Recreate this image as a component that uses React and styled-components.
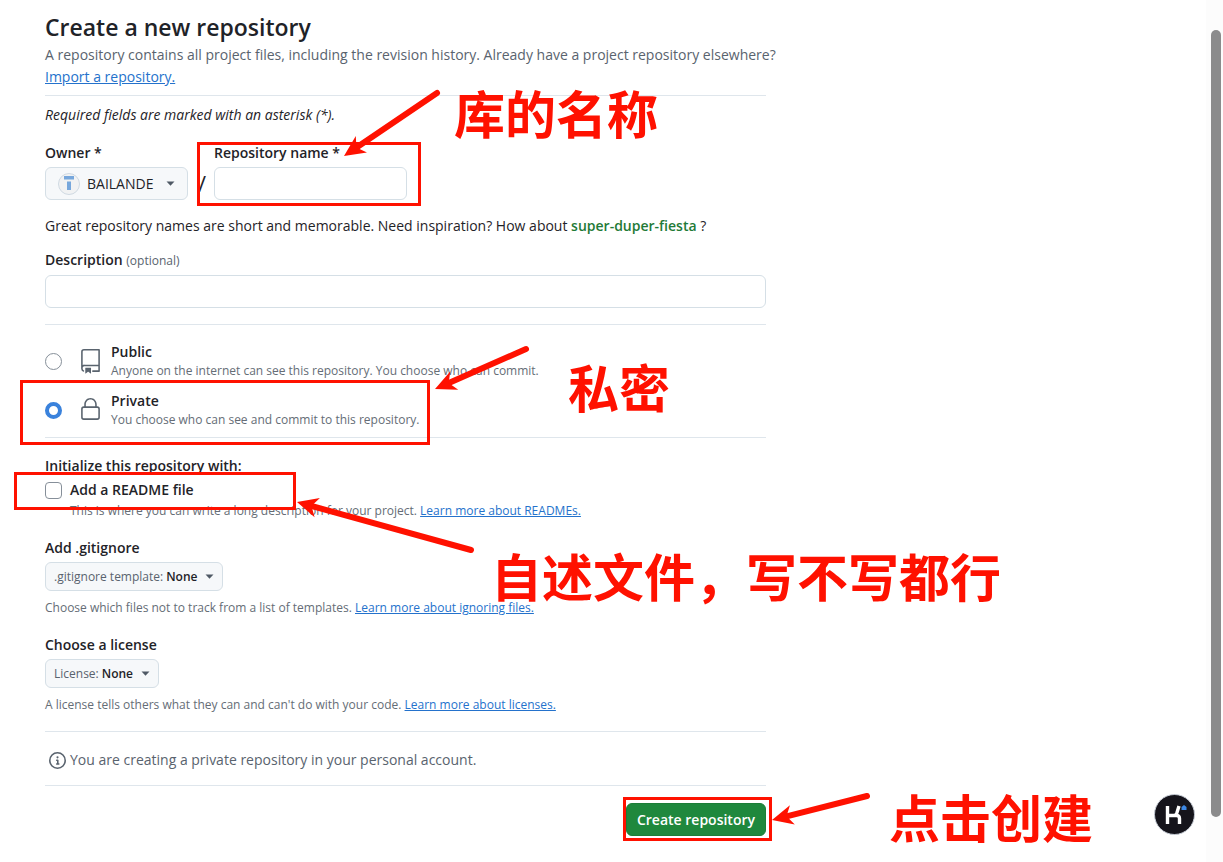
import React from "react";
import styled, { createGlobalStyle } from "styled-components";

const GlobalStyle = createGlobalStyle`
  *, *::before, *::after { box-sizing: border-box; }
  body {
    margin: 0;
    background: #fff;
    color: #1f2328;
    font-family: "Open Sans", "Noto Sans CJK SC", sans-serif;
    font-size: 14px;
    line-height: 22px;
  }
  button, input, select { font: inherit; color: inherit; }
`;

const Page = styled.div`
  position: relative;
  display: flex;
  min-height: 100vh;
`;

const Main = styled.main`
  flex: 1;
  min-width: 0;
  padding: 11px 45px 27px;
`;

const Form = styled.form`
  display: flex;
  flex-direction: column;
  max-width: 721px;
`;

const Title = styled.h1`
  margin: 0;
  font-size: 23px;
  line-height: 32px;
  font-weight: 600;
`;

const Lead = styled.p`
  margin: 1px 0 0;
  color: #59636e;
  white-space: nowrap;
`;

const Link = styled.a`
  color: #2472cc;
  text-decoration: underline;
`;

const Rule = styled.hr`
  width: 100%;
  height: 1px;
  margin: ${({ $top }) => $top}px 0 ${({ $bottom }) => $bottom}px;
  border: 0;
  background: #dfe6ec;
`;

const Required = styled.p`
  margin: 0;
  font-style: italic;
`;

const NameRow = styled.div`
  display: flex;
  align-items: flex-end;
  margin-top: 16px;
`;

const Field = styled.div`
  display: flex;
  flex-direction: column;
  align-items: ${({ $stretch }) => ($stretch ? "stretch" : "flex-start")};
  gap: 3px;
`;

const Label = styled.label`
  font-weight: 600;
`;

const Optional = styled.span`
  font-size: 12px;
  font-weight: 400;
  color: #59636e;
`;

const TextInput = styled.input`
  width: ${({ $width }) => $width || "100%"};
  height: 33px;
  padding: 0 12px;
  border: 1px solid #d5dfe6;
  border-radius: 6px;
  background: #fff;
`;

const Slash = styled.span`
  width: 26px;
  padding-left: 10px;
  font-size: 22px;
  line-height: 33px;
`;

const Picker = styled.label`
  display: inline-flex;
  align-items: center;
  height: ${({ $large }) => ($large ? 33 : 29)}px;
  padding: 0 ${({ $large }) => ($large ? 12 : 8)}px;
  border: 1px solid #d5dfe6;
  border-radius: 6px;
  background: #f6f8fa;
  color: #59636e;
  font-size: ${({ $large }) => ($large ? 14 : 12)}px;
  font-weight: 500;
`;

const Select = styled.select`
  appearance: none;
  margin: 0 ${({ $after }) => $after}px 0 ${({ $before }) => $before}px;
  padding: 0;
  border: 0;
  background: transparent;
  color: #1f2328;
  font-weight: ${({ $weight }) => $weight};
`;

const Suggestion = styled.p`
  margin: 15px 0 12px;
  strong { color: #1f7a37; font-weight: 600; }
`;

const Choice = styled.div`
  display: flex;
  align-items: center;
  gap: 16px;
  height: ${({ $height }) => $height}px;
`;

const Radio = styled.input`
  appearance: none;
  width: 17px;
  height: 17px;
  margin: 0;
  border: 1px solid #868f99;
  border-radius: 50%;
  background: #fff;
  &:checked { border: 4px solid #3a82dc; }
`;

const ChoiceText = styled.label`
  display: flex;
  flex-direction: column;
  margin-left: -8px;
  line-height: 19px;
`;

const Strong = styled.span`
  font-weight: 600;
`;

const Small = styled.span`
  font-size: 12px;
  line-height: 20px;
  color: #656d76;
`;

const GroupTitle = styled.h2`
  margin: 0;
  font-size: 14px;
  line-height: 22px;
  font-weight: 600;
`;

const CheckRow = styled.div`
  display: flex;
  align-items: center;
  gap: 8px;
  margin-top: 3px;
  line-height: 20px;
`;

const CheckBox = styled.input`
  appearance: none;
  width: 17px;
  height: 17px;
  margin: 0;
  border: 1px solid #868f99;
  border-radius: 4px;
  background: #fff;
`;

const Indented = styled.div`
  padding-left: 25px;
  line-height: 20px;
`;

const Section = styled.section`
  display: flex;
  flex-direction: column;
  align-items: flex-start;
  gap: 3px;
  margin-top: 16px;
`;

const Help = styled.p`
  margin: 4px 0 0;
  font-size: 12px;
  line-height: 20px;
  color: #656d76;
`;

const Info = styled.p`
  display: flex;
  align-items: center;
  gap: 4px;
  margin: 0;
  padding-left: 4px;
  color: #59636e;
`;

const Submit = styled.button`
  align-self: flex-end;
  height: 33px;
  padding: 0 10px;
  border: 1px solid #1c7d37;
  border-radius: 6px;
  background: #1f883d;
  color: #fff;
  font-weight: 600;
`;

const Rail = styled.div`
  display: flex;
  width: 17px;
  padding: 30px 2px 46px 5px;
  background: #fcfcfc;
`;

const Thumb = styled.div`
  flex: 1;
  border-radius: 5px;
  background: #8b8b8c;
`;

const Helper = styled.button`
  position: fixed;
  right: 28px;
  bottom: 27px;
  width: 41px;
  height: 41px;
  padding: 0;
  border: 1px solid #c7cdd6;
  border-radius: 50%;
  background: #15141b;
  svg { display: block; }
`;

const Marks = styled.div`
  position: absolute;
  inset: 0;
  pointer-events: none;
`;

const Frame = styled.div`
  position: absolute;
  left: ${({ $x }) => $x}px;
  top: ${({ $y }) => $y}px;
  width: ${({ $w }) => $w}px;
  height: ${({ $h }) => $h}px;
  border: 3px solid #ff1100;
`;

const Note = styled.span`
  position: absolute;
  left: ${({ $x }) => $x}px;
  top: ${({ $y }) => $y}px;
  color: #ff1100;
  font-family: "Noto Sans CJK SC", sans-serif;
  font-size: 51px;
  line-height: 60px;
  font-weight: 700;
  white-space: nowrap;
`;

const Arrows = styled.svg`
  position: absolute;
  left: 0;
  top: 0;
`;

const Caret = () => (
  <svg width="9" height="5" viewBox="0 0 9 5" aria-hidden="true">
    <path d="M0.500 0.500h8L4.500 4.800z" fill="#4f5965" />
  </svg>
);

const Avatar = () => (
  <svg width="22" height="22" viewBox="0 0 22 22" aria-hidden="true">
    <circle cx="11" cy="11" r="10.5" fill="#f1f2f3" stroke="#cfd9e2" />
    <path d="M6 3h10v3.5H6zM9 8.5h4V17H9z" fill="#77a7dc" />
  </svg>
);

const RepoIcon = () => (
  <svg width="25" height="25" viewBox="0 0 24 24" fill="#59636e" aria-hidden="true">
    <path d="M3 2.75A2.75 2.75 0 0 1 5.75 0h14.5a.75.75 0 0 1 .75.75v20.5a.75.75 0 0 1-.75.75h-6a.75.75 0 0 1 0-1.5h5.25v-4H6A1.5 1.5 0 0 0 4.5 18v.75c0 .716.43 1.334 1.05 1.605a.75.75 0 0 1-.6 1.374A3.25 3.25 0 0 1 3 18.75ZM19.5 1.5H5.75c-.69 0-1.25.56-1.25 1.25v12.651A2.989 2.989 0 0 1 6 15h13.5Z" />
    <path d="M7 18.25a.25.25 0 0 1 .25-.25h5a.25.25 0 0 1 .25.25v5.01a.25.25 0 0 1-.397.201l-2.206-1.604a.25.25 0 0 0-.294 0L7.397 23.46a.25.25 0 0 1-.397-.2v-5.01Z" />
  </svg>
);

const LockIcon = () => (
  <svg width="25" height="25" viewBox="0 1 24 24" fill="#59636e" aria-hidden="true">
    <path d="M6 9V7.25C6 3.845 8.503 1 12 1s6 2.845 6 6.25V9h.5a2.5 2.5 0 0 1 2.5 2.500v8a2.5 2.5 0 0 1-2.5 2.5h-13A2.5 2.5 0 0 1 3 19.5v-8A2.5 2.5 0 0 1 5.5 9Zm-1.5 2.5v8a1 1 0 0 0 1 1h13a1 1 0 0 0 1-1v-8a1 1 0 0 0-1-1h-13a1 1 0 0 0-1 1Zm3-4.25V9h9V7.25c0-2.67-1.922-4.75-4.5-4.75-2.578 0-4.5 2.08-4.5 4.75Z" />
  </svg>
);

const InfoIcon = () => (
  <svg width="17" height="17" viewBox="0 0 16 16" fill="#59636e" aria-hidden="true">
    <path d="M0 8a8 8 0 1 1 16 0A8 8 0 0 1 0 8Zm8-6.5a6.5 6.5 0 1 0 0 13 6.5 6.5 0 0 0 0-13ZM6.5 7.75A.75.75 0 0 1 7.25 7h1a.75.75 0 0 1 .75.75v2.75h.25a.75.75 0 0 1 0 1.5h-2a.75.75 0 0 1 0-1.5h.25v-2h-.25a.75.75 0 0 1-.75-.75ZM8 6a1 1 0 1 1 0-2 1 1 0 0 1 0 2Z" />
  </svg>
);

const HelperIcon = () => (
  <svg width="39" height="39" viewBox="0 0 39 39" fill="none" aria-hidden="true">
    <path d="M12.500 11v18M12.500 20.500h9q3 0 3 3v5.500M19 20.500q2 0 3-3l2-6.500" stroke="#fff" strokeWidth="3.400" />
    <path d="M26.500 15v-3l2.500-2 2.500 2v3z" fill="#3c87e4" />
  </svg>
);

const Arrow = ({ from, to }) => {
  const dx = to[0] - from[0];
  const dy = to[1] - from[1];
  const length = Math.hypot(dx, dy);
  const angle = (Math.atan2(dy, dx) * 180) / Math.PI;
  return (
    <g transform={`translate(${to[0]} ${to[1]}) rotate(${angle})`}>
      <path d={`M${-length} 0H-12`} stroke="#ff1100" strokeWidth="6" strokeLinecap="round" />
      <path d="M0 0L-21 -10L-15 0L-21 10Z" fill="#ff1100" />
    </g>
  );
};

export default function App() {
  return (
    <Page>
      <GlobalStyle />
      <Main>
        <Form onSubmit={(event) => event.preventDefault()}>
          <Title>Create a new repository</Title>
          <Lead>
            A repository contains all project files, including the revision history. Already have a project
            repository elsewhere?
            <br />
            <Link href="#import">Import a repository.</Link>
          </Lead>
          <Rule $top={7} $bottom={8} />
          <Required>Required fields are marked with an asterisk (*).</Required>
          <NameRow>
            <Field>
              <Label htmlFor="owner">Owner *</Label>
              <Picker $large htmlFor="owner">
                <Avatar />
                <Select id="owner" $before={7} $after={12} $weight={500}>
                  <option>BAILANDE</option>
                </Select>
                <Caret />
              </Picker>
            </Field>
            <Slash>/</Slash>
            <Field>
              <Label htmlFor="name">Repository name *</Label>
              <TextInput id="name" $width="193px" />
            </Field>
          </NameRow>
          <Suggestion>
            Great repository names are short and memorable. Need inspiration? How about{" "}
            <strong>super-duper-fiesta</strong> ?
          </Suggestion>
          <Field $stretch>
            <Label htmlFor="description">
              Description <Optional>(optional)</Optional>
            </Label>
            <TextInput id="description" />
          </Field>
          <Rule $top={16} $bottom={12} />
          <Choice $height={49}>
            <Radio type="radio" name="visibility" id="public" />
            <RepoIcon />
            <ChoiceText htmlFor="public">
              <Strong>Public</Strong>
              <Small>Anyone on the internet can see this repository. You choose who can commit.</Small>
            </ChoiceText>
          </Choice>
          <Choice $height={48}>
            <Radio type="radio" name="visibility" id="private" defaultChecked />
            <LockIcon />
            <ChoiceText htmlFor="private">
              <Strong>Private</Strong>
              <Small>You choose who can see and commit to this repository.</Small>
            </ChoiceText>
          </Choice>
          <Rule $top={3} $bottom={17} />
          <GroupTitle>Initialize this repository with:</GroupTitle>
          <CheckRow>
            <CheckBox type="checkbox" id="readme" />
            <Label htmlFor="readme">Add a README file</Label>
          </CheckRow>
          <Indented>
            <Small>
              This is where you can write a long description for your project.{" "}
              <Link href="#readmes">Learn more about READMEs.</Link>
            </Small>
          </Indented>
          <Section>
            <GroupTitle>Add .gitignore</GroupTitle>
            <Picker>
              .gitignore template:
              <Select $before={3} $after={7} $weight={600}>
                <option>None</option>
              </Select>
              <Caret />
            </Picker>
            <Help>
              Choose which files not to track from a list of templates.{" "}
              <Link href="#ignoring">Learn more about ignoring files.</Link>
            </Help>
          </Section>
          <Section>
            <GroupTitle>Choose a license</GroupTitle>
            <Picker>
              License:
              <Select $before={3} $after={7} $weight={600}>
                <option>None</option>
              </Select>
              <Caret />
            </Picker>
            <Help>
              A license tells others what they can and can't do with your code.{" "}
              <Link href="#licenses">Learn more about licenses.</Link>
            </Help>
          </Section>
          <Rule $top={16} $bottom={17} />
          <Info>
            <InfoIcon />
            You are creating a private repository in your personal account.
          </Info>
          <Rule $top={14} $bottom={17} />
          <Submit type="submit">Create repository</Submit>
        </Form>
      </Main>
      <Rail>
        <Thumb />
      </Rail>
      <Marks>
        <Frame $x={197} $y={142} $w={224} $h={64} />
        <Frame $x={20} $y={380} $w={410} $h={65} />
        <Frame $x={14} $y={472} $w={282} $h={38} />
        <Frame $x={623} $y={797} $w={149} $h={44} />
        <Arrows width="900" height="862" aria-hidden="true">
          <Arrow from={[437, 93]} to={[344, 156]} />
          <Arrow from={[526, 349]} to={[435, 389]} />
          <Arrow from={[471, 550]} to={[297, 502]} />
          <Arrow from={[867, 796]} to={[772, 820]} />
        </Arrows>
        <Note $x={454} $y={82}>库的名称</Note>
        <Note $x={568} $y={356}>私密</Note>
        <Note $x={491} $y={545}>自述文件，写不写都行</Note>
        <Note $x={889} $y={786}>点击创建</Note>
      </Marks>
      <Helper type="button" aria-label="Assistant">
        <HelperIcon />
      </Helper>
    </Page>
  );
}
